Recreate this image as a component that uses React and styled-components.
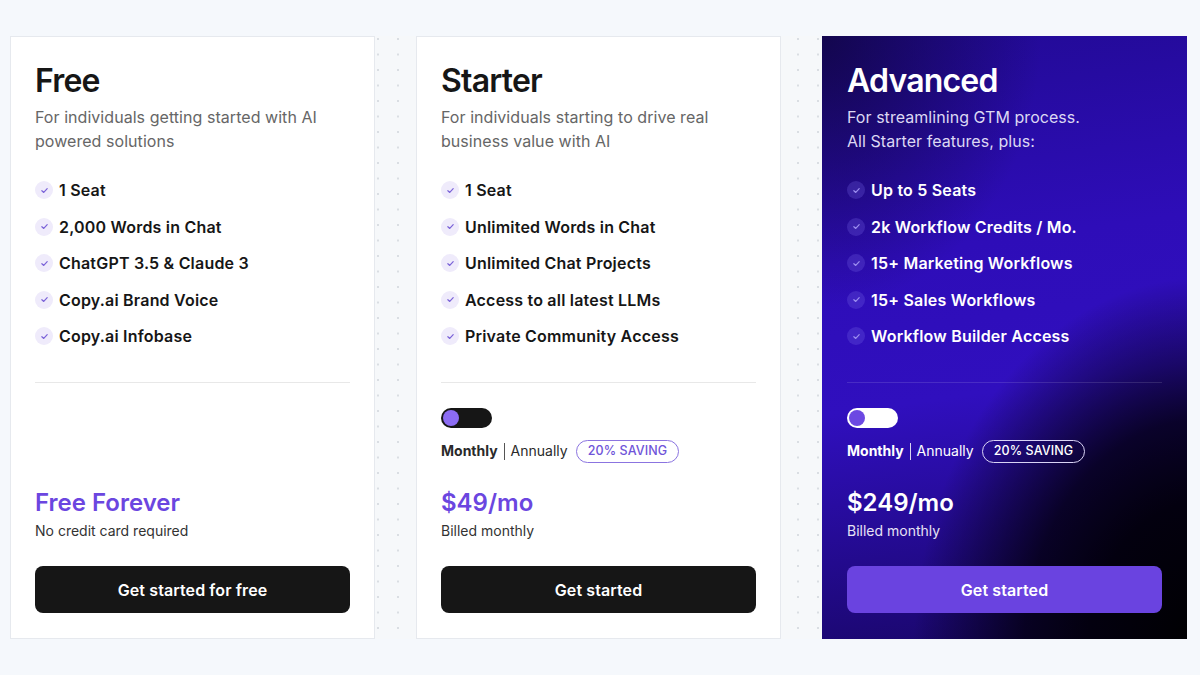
import React from "react";
import styled, { createGlobalStyle, css } from "styled-components";

const Global = createGlobalStyle`
  html, body { margin: 0; padding: 0; }
  body {
    background: #f5f8fc;
    font-family: Inter, "Noto Sans", "Liberation Sans", sans-serif;
    -webkit-font-smoothing: antialiased;
  }
  * { box-sizing: border-box; }
`;

const Page = styled.div`
  width: 1200px;
  height: 675px;
  padding: 36px 0 0 10px;
`;

const Grid = styled.div`
  display: grid;
  grid-template-columns: repeat(3, 365px);
  column-gap: 41px;
  width: 1177px;
  height: 603px;
  background-color: #f6f8fa;
  background-image: radial-gradient(circle, #dadee3 0.9px, transparent 1.3px);
  background-size: 20px 15.5px;
  background-position: -2px -4.75px;
`;

const Card = styled.div`
  display: flex;
  flex-direction: column;
  padding: 24px 24px 25px;
  border: 1px solid #e6e9ee;
  background: #ffffff;
  color: #161616;
  ${(p) =>
    p.$dark &&
    css`
      border: none;
      padding: 25px 25px 26px;
      color: #ffffff;
      background:
        radial-gradient(ellipse 80% 62% at 105% 102%, #000000 0%, #03000f 40%, rgba(4, 0, 20, 0.85) 62%, rgba(10, 2, 50, 0) 100%),
        radial-gradient(ellipse 60% 45% at 0% 0%, rgba(15, 5, 60, 0.8) 0%, rgba(15, 5, 60, 0) 100%),
        linear-gradient(172deg, #220a95 0%, #2e0db8 35%, #300fbe 58%, #180665 100%);
    `}
`;

const Title = styled.h2`
  margin: 0;
  font-size: 32px;
  line-height: 40px;
  font-weight: 600;
  letter-spacing: -0.8px;
`;

const Subtitle = styled.p`
  margin: 4px 0 0;
  font-size: 16px;
  line-height: 24px;
  font-weight: 400;
  letter-spacing: 0.05px;
  color: ${(p) => (p.$dark ? "#dcd8f3" : "#666666")};
`;

const Features = styled.ul`
  list-style: none;
  margin: 25px 0 0;
  padding: 0;
  display: flex;
  flex-direction: column;
  gap: 12.5px;
`;

const Feature = styled.li`
  display: flex;
  align-items: center;
  gap: 6px;
  font-size: 16px;
  line-height: 24px;
  font-weight: 600;
  letter-spacing: 0.2px;
`;

const CheckDot = styled.span`
  width: 18px;
  height: 18px;
  border-radius: 50%;
  display: inline-flex;
  align-items: center;
  justify-content: center;
  flex: none;
  background: ${(p) => (p.$dark ? "rgba(120, 100, 230, 0.28)" : "#efebfb")};
  color: ${(p) => (p.$dark ? "#9d8ff0" : "#7a62d8")};
`;

const Divider = styled.hr`
  margin: 34px 0 0;
  border: none;
  height: 1px;
  background: ${(p) => (p.$dark ? "rgba(255,255,255,0.12)" : "#e8e8e8")};
`;

const Bottom = styled.div`
  margin-top: auto;
  display: flex;
  flex-direction: column;
`;

const Toggle = styled.div`
  width: 51px;
  height: 20px;
  border-radius: 10px;
  padding: 2px;
  display: flex;
  align-items: center;
  background: ${(p) => (p.$dark ? "#ffffff" : "#161616")};
`;

const Knob = styled.span`
  width: 16px;
  height: 16px;
  border-radius: 50%;
  background: ${(p) => (p.$dark ? "#6c48e2" : "#8c6cf3")};
`;

const BillingRow = styled.div`
  margin-top: 12px;
  display: flex;
  align-items: center;
  height: 22px;
  font-size: 14px;
  line-height: 22px;
  color: ${(p) => (p.$dark ? "#ffffff" : "#2a2a2a")};
`;

const Strong = styled.span`
  font-weight: 700;
`;

const Sep = styled.span`
  display: inline-block;
  width: 1px;
  height: 17px;
  margin: 0 6px;
  background: ${(p) => (p.$dark ? "#d8d4f0" : "#555555")};
`;

const Badge = styled.span`
  margin-left: 8px;
  height: 23px;
  padding: 0 11px;
  border-radius: 12px;
  display: inline-flex;
  align-items: center;
  font-size: 12.5px;
  font-weight: 500;
  letter-spacing: 0.1px;
  border: 1px solid ${(p) => (p.$dark ? "#d9d3f5" : "#8b74e0")};
  color: ${(p) => (p.$dark ? "#ffffff" : "#6f55d9")};
`;

const Price = styled.div`
  margin-top: ${(p) => (p.$spaced ? "25px" : "1px")};
  font-size: 24px;
  line-height: 32px;
  font-weight: 600;
  color: ${(p) => (p.$dark ? "#ffffff" : "#6b46e0")};
`;

const Note = styled.div`
  margin-top: 2px;
  font-size: 14px;
  line-height: 20px;
  color: ${(p) => (p.$dark ? "#e6e3f5" : "#333333")};
`;

const Button = styled.button`
  margin-top: 25px;
  height: 47px;
  width: 100%;
  border: none;
  border-radius: 8px;
  font-family: inherit;
  font-size: 16px;
  font-weight: 600;
  letter-spacing: 0.1px;
  color: #ffffff;
  cursor: pointer;
  background: ${(p) => (p.$accent ? "#6a43e0" : "#161616")};
`;

const Check = () => (
  <svg width="9" height="9" viewBox="0 0 12 12" fill="none">
    <path d="M2.5 6.3 L5 8.6 L9.6 3.6" stroke="currentColor" strokeWidth="1.6" strokeLinecap="round" strokeLinejoin="round" />
  </svg>
);

const plans = [
  {
    name: "Free",
    desc: ["For individuals getting started with AI powered solutions"],
    features: ["1 Seat", "2,000 Words in Chat", "ChatGPT 3.5 & Claude 3", "Copy.ai Brand Voice", "Copy.ai Infobase"],
    price: "Free Forever",
    note: "No credit card required",
    cta: "Get started for free",
  },
  {
    name: "Starter",
    desc: ["For individuals starting to drive real business value with AI"],
    features: ["1 Seat", "Unlimited Words in Chat", "Unlimited Chat Projects", "Access to all latest LLMs", "Private Community Access"],
    toggle: true,
    price: "$49/mo",
    note: "Billed monthly",
    cta: "Get started",
  },
  {
    name: "Advanced",
    dark: true,
    desc: ["For streamlining GTM process.", "All Starter features, plus:"],
    features: ["Up to 5 Seats", "2k Workflow Credits / Mo.", "15+ Marketing Workflows", "15+ Sales Workflows", "Workflow Builder Access"],
    toggle: true,
    price: "$249/mo",
    note: "Billed monthly",
    cta: "Get started",
  },
];

export default function App() {
  return (
    <>
      <Global />
      <Page>
        <Grid>
          {plans.map((p) => (
            <Card key={p.name} $dark={p.dark}>
              <Title>{p.name}</Title>
              <Subtitle $dark={p.dark}>
                {p.desc.map((d, i) => (
                  <React.Fragment key={i}>
                    {i > 0 && <br />}
                    {d}
                  </React.Fragment>
                ))}
              </Subtitle>
              <Features>
                {p.features.map((f) => (
                  <Feature key={f}>
                    <CheckDot $dark={p.dark}>
                      <Check />
                    </CheckDot>
                    {f}
                  </Feature>
                ))}
              </Features>
              <Divider $dark={p.dark} />
              <Bottom>
                {p.toggle && (
                  <>
                    <Toggle $dark={p.dark}>
                      <Knob $dark={p.dark} />
                    </Toggle>
                    <BillingRow $dark={p.dark}>
                      <Strong>Monthly</Strong>
                      <Sep $dark={p.dark} />
                      <span>Annually</span>
                      <Badge $dark={p.dark}>20% SAVING</Badge>
                    </BillingRow>
                  </>
                )}
                <Price $dark={p.dark} $spaced={p.toggle}>{p.price}</Price>
                <Note $dark={p.dark}>{p.note}</Note>
                <Button $accent={p.dark}>{p.cta}</Button>
              </Bottom>
            </Card>
          ))}
        </Grid>
      </Page>
    </>
  );
}
